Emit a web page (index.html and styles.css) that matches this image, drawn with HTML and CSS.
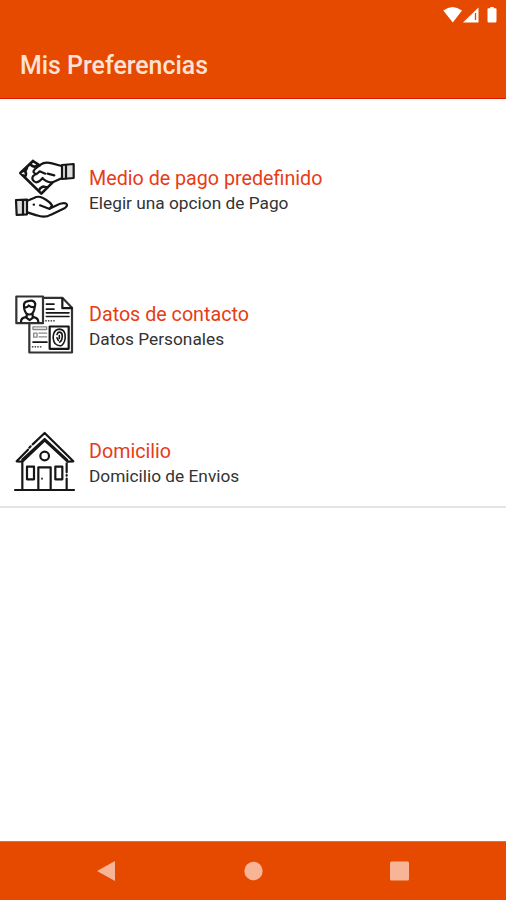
FILE: index.html
```html
<!DOCTYPE html>
<html lang="es">
<head>
<meta charset="utf-8">
<title>Mis Preferencias</title>
<link rel="stylesheet" href="styles.css">
</head>
<body>
<header class="top">
  <div class="status">
    <svg width="64" height="24" viewBox="0 0 64 24" fill="#fff">
      <path d="M1.300 10.500Q10.500 3.500 20 10.500L10.800 22.500Z"/>
      <path d="M36.500 7.500V22.500H21Z"/>
      <path d="M33.500 13v7" stroke="#e64a00" stroke-width="1.300"/>
      <path d="M45.500 9.200q0-1 1-1h1.700V7h3.600v1.200h1.700q1 0 1 1V21q0 1.500-1.500 1.500h-6q-1.500 0-1.500-1.500Z"/>
    </svg>
  </div>
  <h1 class="title">Mis Preferencias</h1>
</header>
<main class="content">
  <ul class="list">
    <li class="item">
      <svg class="icon" viewBox="24 18 192 192">
        <path class="bill" d="M84 33 46 69l63 62 34-34M84 33l20 13M66 52q-3 12-12 11M76 43q12 13 23 2M60 80q8-15-5-18M126 114q-17-11-25 9"/>
        <path d="m170 48-29-8q-22-6-34 4L90 57q-11 12 5 15l9-8 17 7M95 72q-16 5-12 17 8 14 22 3l8-8M113 86l12 8q10 5 20 2l25-11M128 71l20 5"/>
        <path class="cuff" d="m171 45 35-3v42l-35 3Z"/><path d="M183 46v39"/>
        <path class="cuff" d="m33 150 33-1v44l-31 2Z"/><path d="M54 151v42"/>
        <path d="m67 152 20-8q12-7 25-1l12 7q12 7 17 16l-7 11-29-11M67 187l28 9q24 9 43-2l42-20q12-10 1-14-12-2-29 7l-14 7M86 164h1"/>
      </svg>
      <div class="text"><h2 class="name">Medio de pago predefinido</h2><p class="note">Elegir una opcion de Pago</p></div>
    </li>
    <li class="item">
      <svg class="icon" viewBox="24 22.5 192 192">
        <path class="frame" d="M115 40h57l29 30v134H73v-87M34 36h80v80H34Z"/>
        <path d="M172 42v29h28M48 112q0-12 14-14l12 9 12-9q13 2 14 14M65 88v9M83 88v9M57 66q-2-14 12-16 18-5 22 8l-3 16q-4 16-15 16T58 74ZM59 68q8 2 12-5 8 7 18 4"/>
        <path class="thin" d="M124 59h23M124 74h23M124 85h68M124 96h68M84 173h42"/>
        <path class="dots" d="M122 109h29M82 187h30"/>
        <path class="gray" d="M84 127h41v8H84ZM86 146h10v12H86ZM102 146h23M102 157h23"/>
        <path d="M134 126h57v67h-57Z"/>
        <path class="thin" d="M150 177q-8-12-4-29 4-13 17-14 14 1 17 15 3 23-10 34-11 3-20-6M156 150q2-8 8-7 8 1 8 12-1 14-8 18M156 160l4 8M163 153v9"/>
      </svg>
      <div class="text"><h2 class="name">Datos de contacto</h2><p class="note">Datos Personales</p></div>
    </li>
    <li class="item">
      <svg class="icon" viewBox="24 21 192 192">
        <path d="M30 204h177M52 203v-83M185 124v27M185 170v33M83 67l36-34 86 85-17 1-69-64-67 64-17-1 34-35M73 77l4-4M52 113l67-62 68 63"/>
        <circle cx="119" cy="102" r="13"/>
        <path d="M66 134h21v38H66ZM151 134h21v38h-21ZM100 203v-67h37v67M185 159v2"/><path class="thin" d="M111 169v2"/>
      </svg>
      <div class="text"><h2 class="name">Domicilio</h2><p class="note">Domicilio de Envios</p></div>
    </li>
  </ul>
</main>
<nav class="nav">
  <svg width="506" height="58" viewBox="0 0 506 58" fill="#f7b496">
    <path d="M97 29 115 19V39Z"/><circle cx="253.500" cy="29" r="9.200"/><rect x="390" y="19.500" width="19" height="19" rx="1.500"/>
  </svg>
</nav>
</body>
</html>
```
FILE: styles.css
```css
* { box-sizing: border-box; margin: 0; padding: 0; }
body {
  width: 506px;
  height: 900px;
  display: flex;
  flex-direction: column;
  background: #fff;
  font-family: Roboto, sans-serif;
  overflow: hidden;
}
.top { height: 99px; background: #e64a00; border-bottom: 1px solid #e01800; }
.status { height: 32px; display: flex; justify-content: flex-end; }
.title { padding-left: 20px; font-size: 24.9px; line-height: 68px; font-weight: 500; color: #ffe2d6; }
.content { flex: 1; }
.list { list-style: none; height: 409px; border-bottom: 2px solid #e4e4e4; }
.item { height: 136.3px; display: flex; gap: 12px; padding: 57px 0 0 13px; }
.icon {
  width: 64px;
  height: 64px;
  flex: none;
  fill: none;
  stroke: #161616;
  stroke-width: 6.6;
  stroke-linejoin: round;
  stroke-linecap: round;
}
.bill { stroke-width: 8; }
.cuff { fill: #ddd; }
.frame { stroke: #333; }
.thin { stroke-width: 4.8; }
.dots { stroke-width: 3.5; stroke-dasharray: 2 6; }
.gray { stroke: #888; stroke-width: 4; }
.text { padding-top: 10px; white-space: nowrap; }
.name { font-size: 19.7px; line-height: 26px; font-weight: 400; color: #e63c17; }
.note { font-size: 17.3px; line-height: 22.6px; color: #333; }
.nav { height: 59px; background: #e64a00; border-top: 1px solid #ec6a3c; }
```
